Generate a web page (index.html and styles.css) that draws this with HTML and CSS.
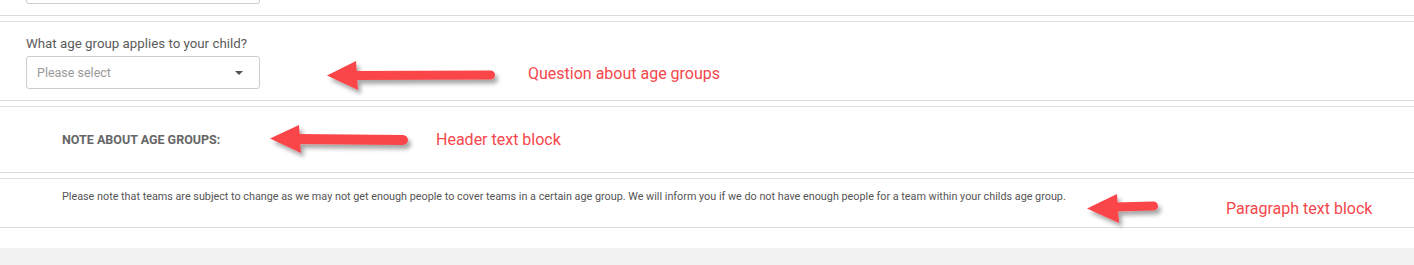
FILE: index.html
```html
<!DOCTYPE html>
<html lang="en">
<head>
<meta charset="utf-8">
<title>Age group form</title>
<link rel="stylesheet" href="styles.css">
</head>
<body>
<main class="form">
  <section class="card card--stub">
    <div class="select select--stub"></div>
  </section>
  <section class="card card--field">
    <label class="field-label">What age group applies to your child?</label>
    <div class="select">
      <span class="placeholder">Please select</span>
      <span class="caret"></span>
    </div>
  </section>
  <section class="card card--heading">
    <h2 class="note-heading">NOTE ABOUT AGE GROUPS:</h2>
  </section>
  <section class="card card--text">
    <p class="note-text">Please note that teams are subject to change as we may not get enough people to cover teams in a certain age group. We will inform you if we do not have enough people for a team within your childs age group.</p>
  </section>
</main>

<svg class="arrows" width="1414" height="265" viewBox="0 0 1414 265" aria-hidden="true">
  <defs>
    <filter id="shadow" x="-20%" y="-50%" width="140%" height="200%">
      <feDropShadow dx="3" dy="4" stdDeviation="2" flood-color="#000" flood-opacity="0.35"/>
    </filter>
  </defs>
  <g class="arrow" filter="url(#shadow)">
    <line x1="352" y1="75.5" x2="490.5" y2="75" stroke-width="9" stroke-linecap="round"/>
    <polygon points="327,75.5 356,61 358,90"/>
  </g>
  <g class="arrow" filter="url(#shadow)">
    <line x1="296" y1="139" x2="403" y2="140" stroke-width="10" stroke-linecap="round"/>
    <polygon points="270,138.5 299,125 301,153"/>
  </g>
  <g class="arrow" filter="url(#shadow)">
    <line x1="1114" y1="207" x2="1153.5" y2="206" stroke-width="9" stroke-linecap="round"/>
    <polygon points="1087,208.5 1117,194 1119,223"/>
  </g>
</svg>
<span class="annotation annotation--question">Question about age groups</span>
<span class="annotation annotation--header">Header text block</span>
<span class="annotation annotation--paragraph">Paragraph text block</span>
</body>
</html>
```
FILE: styles.css
```css
html, body {
  margin: 0;
  padding: 0;
}
body {
  background: #f2f2f2;
  font-family: Roboto, "Liberation Sans", Arial, sans-serif;
  overflow: hidden;
}
.form {
  display: flex;
  flex-direction: column;
  gap: 5px;
  background: #ffffff;
  padding-bottom: 20px;
}
.card {
  display: flex;
  flex-direction: column;
  align-items: flex-start;
  border-top: 1px solid #dcdcdc;
  border-bottom: 1px solid #dcdcdc;
  padding: 0 26px;
}
.card--stub {
  border-top: none;
  padding-bottom: 11px;
}
.card--field {
  padding-top: 14px;
  padding-bottom: 11px;
}
.card--heading {
  padding: 25px 62px;
}
.card--text {
  padding: 11px 62px 23px;
}
.field-label {
  font-size: 13.3px;
  line-height: 15px;
  color: #5b5b5b;
  margin-bottom: 5px;
}
.select {
  box-sizing: border-box;
  width: 234px;
  height: 33px;
  border: 1px solid #cccccc;
  border-radius: 3px;
  display: flex;
  align-items: center;
  justify-content: space-between;
  padding: 0 16px 0 10px;
  background: #fff;
}
.select--stub {
  margin-top: -29px;
}
.placeholder {
  font-size: 12.5px;
  color: #9a9a9a;
}
.caret {
  width: 0;
  height: 0;
  border-left: 4px solid transparent;
  border-right: 4px solid transparent;
  border-top: 4px solid #555;
}
.note-heading {
  margin: 0;
  font-size: 12.5px;
  line-height: 15px;
  font-weight: 700;
  color: #666666;
}
.note-text {
  margin: 0;
  font-size: 10.8px;
  line-height: 14px;
  color: #555555;
}
.arrows {
  position: absolute;
  left: 0;
  top: 0;
  pointer-events: none;
}
.arrow line {
  stroke: #fa4549;
}
.arrow polygon {
  fill: #fa4549;
}
.annotation {
  position: absolute;
  font-size: 16px;
  line-height: 20px;
  color: #f5474c;
  white-space: nowrap;
}
.annotation--question {
  left: 528px;
  top: 64px;
}
.annotation--header {
  left: 436px;
  top: 130px;
}
.annotation--paragraph {
  left: 1226px;
  top: 199px;
}
```
